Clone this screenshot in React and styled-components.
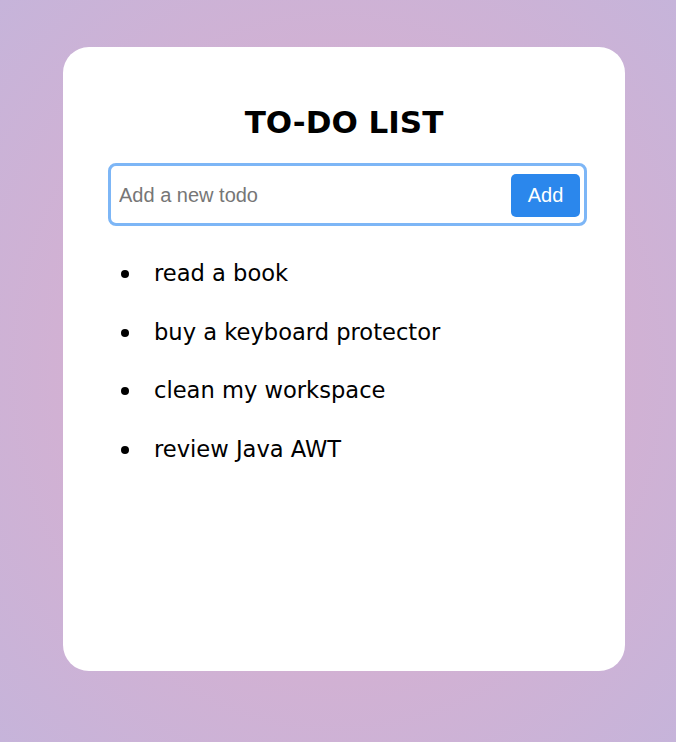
import React, { useState } from 'react'
import styled, { createGlobalStyle } from 'styled-components'

const GlobalStyle = createGlobalStyle`
  html, body {
    margin: 0;
    padding: 0;
  }
  body {
    min-height: 100vh;
    background: radial-gradient(ellipse at center, #d8aed0 0%, #d5b0d1 45%, #c6b4da 100%);
    font-family: "DejaVu Sans", Verdana, sans-serif;
  }
`

const Page = styled.div`
  min-height: 742px;
  box-sizing: border-box;
  padding: 47px 51px 0 63px;
`

const Card = styled.div`
  box-sizing: border-box;
  width: 562px;
  height: 624px;
  background: #fff;
  border-radius: 26px;
  padding: 57px 38px 0 45px;
`

const Title = styled.h1`
  margin: 0 7px 23px 0;
  text-align: center;
  font-family: "DejaVu Sans", Verdana, sans-serif;
  font-weight: bold;
  font-size: 31px;
  color: #000;
`

const Form = styled.form`
  display: flex;
  align-items: center;
  gap: 8px;
  height: 63px;
  box-sizing: border-box;
  border: 3px solid #7db6f6;
  border-radius: 8px;
  padding: 1px 4px 0 8px;
`

const Input = styled.input`
  flex: 1;
  min-width: 0;
  padding: 0;
  border: none;
  outline: none;
  background: transparent;
  font-family: "Liberation Sans", Arial, sans-serif;
  font-size: 20px;
  color: #222;

  &::placeholder {
    color: #767676;
  }
`

const AddButton = styled.button`
  width: 69px;
  height: 43px;
  border: none;
  border-radius: 5px;
  background: #2b87ec;
  color: #fff;
  font-family: "Liberation Sans", Arial, sans-serif;
  font-size: 20px;
  cursor: pointer;
`

const List = styled.ul`
  list-style: none;
  margin: 34px 0 0;
  padding-left: 13px;
`

const Item = styled.li`
  display: flex;
  align-items: center;
  font-size: 22.6px;
  line-height: 26px;
  margin-bottom: 32.7px;
  color: #000;

  &::before {
    content: "";
    flex: none;
    width: 8px;
    height: 8px;
    border-radius: 50%;
    background: #000;
    margin: 2px 25px 0 0;
  }
`

export default function App() {
  const [todos, setTodos] = useState([
    'read a book',
    'buy a keyboard protector',
    'clean my workspace',
    'review Java AWT',
  ])
  const [text, setText] = useState('')

  const addTodo = (e) => {
    e.preventDefault()
    if (!text.trim()) return
    setTodos([...todos, text.trim()])
    setText('')
  }

  return (
    <>
      <GlobalStyle />
      <Page>
        <Card>
          <Title>TO-DO LIST</Title>
          <Form onSubmit={addTodo}>
            <Input
              placeholder="Add a new todo"
              value={text}
              onChange={(e) => setText(e.target.value)}
            />
            <AddButton type="submit">Add</AddButton>
          </Form>
          <List>
            {todos.map((t, i) => (
              <Item key={i}>{t}</Item>
            ))}
          </List>
        </Card>
      </Page>
    </>
  )
}
